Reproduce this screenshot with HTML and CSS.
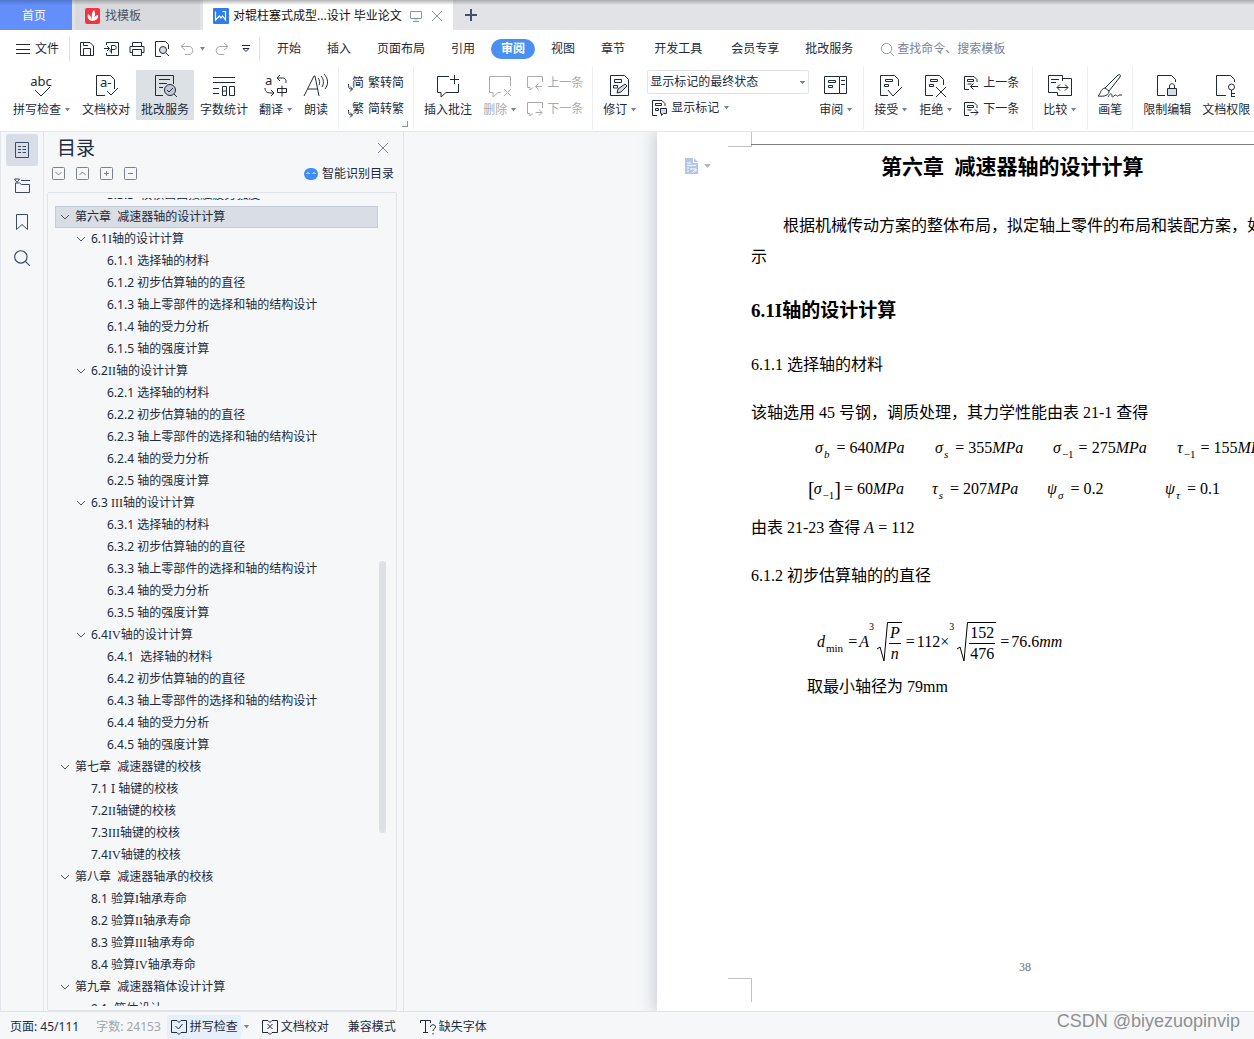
FILE: index.html
```html
<!DOCTYPE html>
<html lang="zh-CN">
<head>
<meta charset="utf-8">
<title>对辊柱塞式成型机设计 毕业论文</title>
<link rel="stylesheet" href="styles.css">
</head>
<body>
<svg class="sprite" aria-hidden="true">
  <symbol id="caret" viewBox="0 0 7 4"><path d="M1 0h5L3.500 3.500z" fill="#77829b"/></symbol>
  <symbol id="chev" viewBox="0 0 10 10"><path d="M1 3l4 4 4-4"/></symbol>
  <symbol id="hook" viewBox="0 0 5 8"><path d="M.5 0c0 4 0 5 4 5M2 2.500L4.500 5 2 7.500"/></symbol>
  <symbol id="mag" viewBox="0 0 16 16"><circle cx="7" cy="7" r="5.500"/><path d="M11 11l4 4"/></symbol>
  <symbol id="prev" viewBox="0 0 16 16"><path d="M6 14.500H1.500V1.500H11l3 3V7M4.500 4.500h6v2h-6zM4.500 9h4M15 11.500H7.500M10.500 8.500l-3 3 3 3"/></symbol>
  <symbol id="next" viewBox="0 0 16 16"><path d="M6 14.500H1.500V1.500H11l3 3V7M4.500 4.500h6v2h-6zM4.500 9h4M7.500 11.500H15M12 8.500l3 3-3 3"/></symbol>
</svg>

<header class="tabs">
  <button class="tab tab-home">首页</button>
  <button class="tab tab-tpl">
    <svg width="16" height="16" viewBox="0 0 16 16"><rect width="15" height="16" rx="2" fill="#f5333f"/><path d="M7 13C3 12 2 9 3 6c2 1 3 3 4 6C6 8 7 4 9 2c2 3 1 7-1 10 1-3 3-5 5-5 1 3-2 6-6 6z" fill="#fff"/></svg>
    找模板</button>
  <div class="tab tab-doc">
    <svg width="16" height="16" viewBox="0 0 16 16"><rect width="16" height="16" rx="1" fill="#2f7de8"/><path d="M2.500 3.500V12l4-4 1.500 2 1.500-2 3 4V3.500h-3" fill="none" stroke="#fff" stroke-width="1.200"/></svg>
    <span>对辊柱塞式成型...设计 毕业论文</span>
    <svg class="ln mute" width="12" height="12" viewBox="0 0 12 12"><path d="M.5 1.500h11v7H.5zM6 8.500v2M3 11.500h6"/></svg>
    <button class="ghost" aria-label="关闭标签"><svg class="ln mute" width="12" height="12" viewBox="0 0 12 12"><path d="M1 1l10 10M11 1L1 11"/></svg></button>
  </div>
  <button class="ghost plus" aria-label="新建标签"><svg width="12" height="12" viewBox="0 0 12 12"><path d="M6 0v12M0 6h12" stroke="#444f68" stroke-width="2"/></svg></button>
</header>

<nav class="menu">
  <button class="ghost file"><svg class="ln" width="14" height="12" viewBox="0 0 14 12"><path d="M0 1.500h14M0 6.500h14M0 10.500h14"/></svg>文件</button>
  <div class="quick">
    <button class="ghost" aria-label="保存"><svg class="ln" width="16" height="16" viewBox="0 0 16 16"><path d="M1.500 14.500v-13H11l3.500 3.500v9.500zM4.500 14V7.500h7V14M4.500 1.500v3H9"/></svg></button>
    <button class="ghost" aria-label="输出为PDF"><svg class="ln" width="16" height="16" viewBox="0 0 16 16"><path d="M2.500 4V1.500h12v13h-12V12M0 7.500h5M3 5l2.500 2.500L3 10M7.500 12.500V4.500H10c3 0 3 4 0 4H7.500c-2 0-2 2.500 0 2.500"/></svg></button>
    <button class="ghost" aria-label="打印"><svg class="ln" width="16" height="16" viewBox="0 0 16 16"><path d="M3.500 5.500v-4h9v4M3.500 11.500H1v-6h14v6h-2.500M3.500 8.500h9v6h-9z"/></svg></button>
    <button class="ghost" aria-label="打印预览"><svg class="ln" width="16" height="16" viewBox="0 0 16 16"><path d="M7 15.500H1.500V.5h10l3 3V8"/><circle cx="9" cy="9" r="3.500" fill="#d5dbe3"/><path d="M12 12l3 3"/></svg></button>
    <button class="ghost split" aria-label="撤销"><svg class="ln dim" width="14" height="14" viewBox="0 0 14 14"><path d="M5 1L1 4.500 5 8M1 4.500h8c5 0 5 8 0 8H5"/></svg><svg width="7" height="4"><use href="#caret"/></svg></button>
    <button class="ghost" aria-label="恢复"><svg class="ln dim" width="14" height="14" viewBox="0 0 14 14"><path d="M9 1l4 3.500L9 8M13 4.500H5c-5 0-5 8 0 8h4"/></svg></button>
    <button class="ghost more" aria-label="自定义"><svg class="ln" width="8" height="8" viewBox="0 0 8 8"><path d="M0 .5h8M1 3.500l3 3 3-3z"/></svg></button>
  </div>
  <ul class="items">
    <li><a href="#">开始</a></li><li><a href="#">插入</a></li><li><a href="#">页面布局</a></li><li><a href="#">引用</a></li>
    <li class="on"><a href="#">审阅</a></li><li><a href="#">视图</a></li><li class="wide"><a href="#">章节</a></li>
    <li class="wide"><a href="#">开发工具</a></li><li><a href="#">会员专享</a></li><li><a href="#">批改服务</a></li>
  </ul>
  <label class="search"><svg class="ln" width="15" height="15"><use href="#mag"/></svg><input type="text" placeholder="查找命令、搜索模板" aria-label="查找命令、搜索模板"></label>
</nav>

<section class="ribbon">
  <div class="group first">
    <button class="tool"><svg class="ln" width="24" height="24" viewBox="0 0 24 24"><text x="11" y="13" text-anchor="middle" class="abc">abc</text><path d="M5 17l6 6 9-9"/></svg><span>拼写检查<svg width="7" height="4"><use href="#caret"/></svg></span></button>
    <button class="tool"><svg class="ln" width="24" height="24" viewBox="0 0 24 24"><text x="6" y="14" class="abc">a-</text><path d="M11 22.500H2.500v-20h14l4 4V16M13 18l4 4 7-7"/></svg><span>文档校对</span></button>
    <button class="tool on"><svg class="ln" width="24" height="24" viewBox="0 0 24 24"><path d="M10 22.500H2.500v-20h18V11M6 6.500h11M6 10.500h8M6 14.500h4"/><circle cx="17" cy="17" r="5.500" fill="#c4cad3"/><path d="M14 17l2 2 4-4M21 21l3 3"/></svg><span>批改服务</span></button>
    <button class="tool"><svg class="ln" width="24" height="24" viewBox="0 0 24 24"><path d="M1 4.500h22M1 9.500h22M1 15.500h6M1 20.500h6M10.500 13.500h4v9h-4zM17.500 13.500h5v9h-5zM10.500 18h4"/></svg><span>字数统计</span></button>
    <button class="tool"><svg class="ln" width="24" height="24" viewBox="0 0 24 24"><text x="1" y="12" class="abc">a</text><path d="M16 2l-3 3 3 3M13.500 5h5c4 0 4 4 3 5M1 15c0 4 2 5 8 5M7 17l3 3-3 3M13.500 15.500h9v4h-9zM18 12.500v11"/></svg><span>翻译<svg width="7" height="4"><use href="#caret"/></svg></span></button>
    <button class="tool"><svg class="ln" width="24" height="24" viewBox="0 0 24 24"><path d="M0 23L10 3h1l4 20M4 16h10M14 5c2 2 2 5 1 7M17 3c3 3 3 8 1 11M20 1c4 4 5 10 1 15"/></svg><span>朗读</span></button>
  </div>
  <div class="group corner">
    <div class="minis">
      <button class="mini"><span class="glyph"><svg class="ln" width="5" height="8"><use href="#hook"/></svg>简</span>繁转简</button>
      <button class="mini"><span class="glyph"><svg class="ln" width="5" height="8"><use href="#hook"/></svg>繁</span>简转繁</button>
    </div>
  </div>
  <div class="group">
    <button class="tool"><svg class="ln" width="24" height="24" viewBox="0 0 24 24"><path d="M13 3.500H1.500v16H5V24l5-4.500h12.500V11M14 6.500h9M18.500 2v9"/></svg><span>插入批注</span></button>
    <button class="tool off"><svg class="ln" width="24" height="24" viewBox="0 0 24 24"><path d="M22.500 13V3.500h-21v16H5V24l5-4.500h3M16 16l7 7M23 16l-7 7"/></svg><span>删除<svg width="7" height="4"><use href="#caret"/></svg></span></button>
    <div class="minis">
      <button class="mini off"><svg class="ln" width="16" height="16" viewBox="0 0 16 16"><path d="M15.500 7V1.500H.5v11H3V15l3-2.500M15 11.500H8.500M11.500 8.500l-3 3 3 3"/></svg>上一条</button>
      <button class="mini off"><svg class="ln" width="16" height="16" viewBox="0 0 16 16"><path d="M15.500 7V1.500H.5v11H3V15l3-2.500M8.500 11.500H15M12 8.500l3 3-3 3"/></svg>下一条</button>
    </div>
  </div>
  <div class="group">
    <button class="tool"><svg class="ln" width="24" height="24" viewBox="0 0 24 24"><path d="M2.500 2.500h14l4 4v16h-18zM6.500 6.500h7v3h-7zM5.500 12.500h4v2.500h-4z"/><path d="M9 20l1-4 7-5 2 2-6 6z" fill="#d5dbe3"/></svg><span>修订<svg width="7" height="4"><use href="#caret"/></svg></span></button>
    <div class="minis markup">
      <select aria-label="标记显示状态"><option>显示标记的最终状态</option></select>
      <button class="mini"><svg class="ln" width="16" height="16" viewBox="0 0 16 16"><path d="M6 15.500H1.500V.5H11l3 3V6M4.500 3.500h6v2h-6zM4.500 8.500h3v2h-3z"/><path d="M9.500 8.500h6v5h-3l-2 2v-2h-1z" fill="#d5dbe3"/></svg>显示标记<svg width="7" height="4"><use href="#caret"/></svg></button>
    </div>
    <button class="tool"><svg class="ln" width="24" height="24" viewBox="0 0 24 24"><path d="M.5 3.500h15v17H.5zM15.500 3.500h7v17h-7M4.500 7.500h7v2h-7zM4.500 12.500h4v2h-4zM17 7.500h4M17 11.500h4"/></svg><span>审阅<svg width="7" height="4"><use href="#caret"/></svg></span></button>
  </div>
  <div class="group">
    <button class="tool"><svg class="ln" width="24" height="24" viewBox="0 0 24 24"><path d="M9 22.500H1.500v-20h14l4 4V13M6.500 6.500h7v2h-7zM5.500 11.500h4v2h-4zM9 17l5 6 9-9"/></svg><span>接受<svg width="7" height="4"><use href="#caret"/></svg></span></button>
    <button class="tool"><svg class="ln" width="24" height="24" viewBox="0 0 24 24"><path d="M9 22.500H1.500v-20h14l4 4V12M6.500 6.500h7v2h-7zM5.500 11.500h4v2h-4zM12 14l10 10M22 14L12 24"/></svg><span>拒绝<svg width="7" height="4"><use href="#caret"/></svg></span></button>
    <div class="minis last">
      <button class="mini"><svg class="ln" width="16" height="16"><use href="#prev"/></svg>上一条</button>
      <button class="mini"><svg class="ln" width="16" height="16"><use href="#next"/></svg>下一条</button>
    </div>
  </div>
  <div class="group">
    <button class="tool"><svg class="ln" width="24" height="24" viewBox="0 0 24 24"><path d="M14.500 8V2.500H.5v17h9M14.500 5.500h9v17h-14v-3M3 6.500h8M3 9.500h5M9 14.500h11M12 11.500l-3 3 3 3M17 11.500l3 3-3 3"/></svg><span>比较<svg width="7" height="4"><use href="#caret"/></svg></span></button>
  </div>
  <div class="group">
    <button class="tool"><svg class="ln" width="24" height="24" viewBox="0 0 24 24"><path d="M7 15L20 2c2-1 3 0 2 2L11 18M7 15l4 3c0 4-4 6-11 5 3-2 2-7 7-8zM10 24c2-4 4-4 4-1s3-2 4-1 1 2 3 0l3 0"/></svg><span>画笔</span></button>
  </div>
  <div class="group">
    <button class="tool"><svg class="ln" width="24" height="24" viewBox="0 0 24 24"><path d="M10 22.500H2.500v-20h14l4 4V9"/><path d="M12.500 15.500h9v7h-9z" fill="#d5dbe3"/><path d="M14.500 15v-2c0-3 5-3 5 0v2"/></svg><span>限制编辑</span></button>
    <button class="tool"><svg class="ln" width="24" height="24" viewBox="0 0 24 24"><path d="M12 22.500H2.500v-20h14l4 4V9"/><circle cx="17.500" cy="14" r="3"/><path d="M17.500 17v7M18 20.500h3M18 23.500h3"/></svg><span>文档权限</span></button>
  </div>
</section>

<main class="work">
  <aside class="rail">
    <button class="ghost on" aria-label="目录"><svg class="ln" width="16" height="18" viewBox="0 0 16 18"><path d="M1.500 1.500h13v15h-13zM4 5.500h3M8.500 5.500H12M4 8.500h3M8.500 8.500H12M4 11.500h3M8.500 11.500H12"/></svg></button>
    <button class="ghost" aria-label="章节"><svg class="ln" width="16" height="16" viewBox="0 0 16 16"><path d="M.5 1h5L3 4.500zM7 2.500h9M1.500 7v7.500h14v-8h-8l-2-1.500H1.500V9"/></svg></button>
    <button class="ghost" aria-label="书签"><svg class="ln" width="12" height="16" viewBox="0 0 12 16"><path d="M.5.5h11v15L6 10.500.5 15.500z"/></svg></button>
    <button class="ghost" aria-label="查找"><svg class="ln" width="18" height="18"><use href="#mag"/></svg></button>
  </aside>
  <section class="panel">
    <div class="panel-head"><h1>目录</h1><button class="ghost" aria-label="关闭"><svg class="ln" width="10" height="10" viewBox="0 0 10 10"><path d="M0 0l10 10M10 0L0 10"/></svg></button></div>
    <div class="panel-tools">
      <button class="ghost" aria-label="展开"><svg class="ln" width="13" height="13" viewBox="0 0 13 13"><rect x=".5" y=".5" width="12" height="12" rx="1"/><path d="M3.500 5l3 3 3-3"/></svg></button>
      <button class="ghost" aria-label="折叠"><svg class="ln" width="13" height="13" viewBox="0 0 13 13"><rect x=".5" y=".5" width="12" height="12" rx="1"/><path d="M3.500 8l3-3 3 3"/></svg></button>
      <button class="ghost" aria-label="增加级别"><svg class="ln" width="13" height="13" viewBox="0 0 13 13"><rect x=".5" y=".5" width="12" height="12" rx="1"/><path d="M4 6.500h5M6.500 4v5"/></svg></button>
      <button class="ghost" aria-label="减少级别"><svg class="ln" width="13" height="13" viewBox="0 0 13 13"><rect x=".5" y=".5" width="12" height="12" rx="1"/><path d="M4 6.500h5"/></svg></button>
      <button class="ghost smart"><svg width="14" height="12" viewBox="0 0 14 12"><rect width="14" height="12" rx="6" fill="#3f8ef7"/><path d="M2.500 6l1.500-1.500L5.500 6M8.500 6L10 4.500 11.500 6" fill="none" stroke="#fff"/></svg>智能识别目录</button>
    </div>
    <div class="tree">
      <ul>
        <li class="l3">5.3.3&nbsp; 校核齿面接触疲劳强度</li>
        <li class="l1 sel"><svg><use href="#chev"/></svg>第六章&nbsp; 减速器轴的设计计算</li>
        <li class="l2"><svg><use href="#chev"/></svg>6.1<b>I</b>轴的设计计算</li>
        <li class="l3">6.1.1 选择轴的材料</li>
        <li class="l3">6.1.2 初步估算轴的的直径</li>
        <li class="l3">6.1.3 轴上零部件的选择和轴的结构设计</li>
        <li class="l3">6.1.4 轴的受力分析</li>
        <li class="l3">6.1.5 轴的强度计算</li>
        <li class="l2"><svg><use href="#chev"/></svg>6.2<b>II</b>轴的设计计算</li>
        <li class="l3">6.2.1 选择轴的材料</li>
        <li class="l3">6.2.2 初步估算轴的的直径</li>
        <li class="l3">6.2.3 轴上零部件的选择和轴的结构设计</li>
        <li class="l3">6.2.4 轴的受力分析</li>
        <li class="l3">6.2.5 轴的强度计算</li>
        <li class="l2"><svg><use href="#chev"/></svg>6.3 <b>III</b>轴的设计计算</li>
        <li class="l3">6.3.1 选择轴的材料</li>
        <li class="l3">6.3.2 初步估算轴的的直径</li>
        <li class="l3">6.3.3 轴上零部件的选择和轴的结构设计</li>
        <li class="l3">6.3.4 轴的受力分析</li>
        <li class="l3">6.3.5 轴的强度计算</li>
        <li class="l2"><svg><use href="#chev"/></svg>6.4<b>IV</b>轴的设计计算</li>
        <li class="l3">6.4.1&nbsp; 选择轴的材料</li>
        <li class="l3">6.4.2 初步估算轴的的直径</li>
        <li class="l3">6.4.3 轴上零部件的选择和轴的结构设计</li>
        <li class="l3">6.4.4 轴的受力分析</li>
        <li class="l3">6.4.5 轴的强度计算</li>
        <li class="l1"><svg><use href="#chev"/></svg>第七章&nbsp; 减速器键的校核</li>
        <li class="leaf">7.1 I 轴键的校核</li>
        <li class="leaf">7.2<b>II</b>轴键的校核</li>
        <li class="leaf">7.3<b>III</b>轴键的校核</li>
        <li class="leaf">7.4<b>IV</b>轴键的校核</li>
        <li class="l1"><svg><use href="#chev"/></svg>第八章&nbsp; 减速器轴承的校核</li>
        <li class="leaf">8.1 验算<b>I</b>轴承寿命</li>
        <li class="leaf">8.2 验算<b>II</b>轴承寿命</li>
        <li class="leaf">8.3 验算<b>III</b>轴承寿命</li>
        <li class="leaf">8.4 验算<b>IV</b>轴承寿命</li>
        <li class="l1"><svg><use href="#chev"/></svg>第九章&nbsp; 减速器箱体设计计算</li>
        <li class="leaf">9.1&nbsp; 箱体设计</li>
      </ul>
      <div class="thumb"></div>
    </div>
  </section>
  <section class="canvas">
    <article class="page">
      <div class="gutter">
        <div class="crop top"></div>
        <button class="ghost note" aria-label="批注选项"><svg width="13" height="16" viewBox="0 0 13 16"><path d="M0 0h8v5h5v11H0z" fill="#b3c7e8"/><path d="M9 0l4 4H9z" fill="#b3c7e8"/><path d="M2 5h4M2 7.500h9M2 10h2M2 13h2M5 11h6v2H9l-1.500 1.500" stroke="#fff" fill="none"/></svg><svg width="7" height="4" viewBox="0 0 7 4"><path d="M0 0h7L3.500 4z" fill="#b4b6ba"/></svg></button>
        <div class="crop bottom"></div>
      </div>
      <div class="content">
        <div class="head-rule"></div>
        <h2>第六章&nbsp; 减速器轴的设计计算</h2>
        <p class="lead">根据机械传动方案的整体布局，拟定轴上零件的布局和装配方案，如<br>示</p>
        <h3>6.1I轴的设计计算</h3>
        <h4>6.1.1 选择轴的材料</h4>
        <p class="after-h">该轴选用 45 号钢，调质处理，其力学性能由表 21-1 查得</p>
        <div class="eqs one">
          <span><i>σ</i><sub><i>b</i></sub><u>=</u>640<i>MPa</i></span>
          <span><i>σ</i><sub><i>s</i></sub><u>=</u>355<i>MPa</i></span>
          <span><i>σ</i><sub>−1</sub><u>=</u>275<i>MPa</i></span>
          <span><i>τ</i><sub>−1</sub><u>=</u>155<i>MPa</i></span>
        </div>
        <div class="eqs two">
          <span><em>[</em><i>σ</i><sub>−1</sub><em>]</em><u>=</u>60<i>MPa</i></span>
          <span><i>τ</i><sub><i>s</i></sub><u>=</u>207<i>MPa</i></span>
          <span><i>ψ</i><sub><i>σ</i></sub><u>=</u>0.2</span>
          <span><i>ψ</i><sub><i>τ</i></sub><u>=</u>0.1</span>
        </div>
        <p class="given">由表 21-23 查得 <i>A</i> = 112</p>
        <h4 class="second">6.1.2 初步估算轴的的直径</h4>
        <div class="formula">
          <span><i>d</i><sub>min</sub></span><u>=</u><i>A</i><small>3</small>
          <svg width="11" height="40" viewBox="0 0 11 40"><path d="M0 27l3-2 4 14L10.500.5H11" fill="none" stroke="#000"/></svg><span class="frac"><i>P</i><i>n</i></span>
          <u>=</u>112×<small>3</small>
          <svg width="11" height="40" viewBox="0 0 11 40"><path d="M0 27l3-2 4 14L10.500.5H11" fill="none" stroke="#000"/></svg><span class="frac"><span>152</span><span>476</span></span>
          <u>=</u>76.6<i>mm</i>
        </div>
        <p class="result">取最小轴径为 79mm</p>
        <footer>38</footer>
      </div>
    </article>
  </section>
</main>

<footer class="status">
  <span class="cell">页面: 45/111</span>
  <span class="cell count">字数: 24153</span>
  <button class="cell spell"><span><svg class="ln" width="16" height="16" viewBox="0 0 16 16"><path d="M6 1.500H.5v12H6l2 2 2-2h5.500v-12H10l-2 2-2-2zM4.500 7l3 3 4-5"/></svg>拼写检查</span><svg width="7" height="4"><use href="#caret"/></svg></button>
  <button class="cell proof"><svg class="ln" width="16" height="16" viewBox="0 0 16 16"><path d="M6 1.500H.5v12H6l2 2 2-2h5.500v-12H10l-2 2-2-2zM5.500 5l5 5M10.500 5l-5 5"/></svg>文档校对</button>
  <span class="cell mode">兼容模式</span>
  <button class="cell font"><svg class="ln" width="16" height="16" viewBox="0 0 16 16"><path d="M.5 4V1.500h10V4M5.500 1.500v12M3 13.500h5M10.500 8c0-3 5-3 5 0 0 2-2.500 2-2.500 4M13 14v1.500"/></svg>缺失字体</button>
  <span class="mark">CSDN @biyezuopinvip</span>
</footer>
</body>
</html>
```
FILE: styles.css
```css
* { box-sizing: border-box; margin: 0; padding: 0; }
body {
  height: 100vh;
  display: flex;
  flex-direction: column;
  overflow: hidden;
  font: 12px/18px "Noto Sans", "Noto Sans CJK SC", sans-serif;
  color: #202a3d;
  background: #f5f7f9;
  white-space: nowrap;
}
ul { list-style: none; }
a { color: inherit; text-decoration: none; }
button, input, select { font: inherit; color: inherit; border: 0; background: none; }
svg { flex: none; overflow: visible; }
.sprite { position: absolute; width: 0; height: 0; }
.ln { fill: none; stroke: currentColor; }
.mute { color: #8c97ae; }
.dim { color: #a6a9ae; }
.ghost { display: flex; align-items: center; justify-content: center; }

/* window tabs */
.tabs {
  height: 30px;
  flex: none;
  display: flex;
  background: linear-gradient(#a9aaad, #e2e3e7 5px);
}
.tab { display: flex; align-items: center; height: 30px; padding-top: 1px; }
.tab-home { width: 72px; padding-right: 4px; justify-content: center; background: linear-gradient(#4e74cc, #628ffb 5px); color: #fff; }
.tab-tpl { width: 125px; margin-left: 3px; padding-left: 10px; gap: 4px; background: linear-gradient(#a4a5a8, #d9dadd 5px); color: #4d5361; }
.tab-doc { width: 250px; margin-left: 3px; padding-left: 10px; gap: 4px; background: linear-gradient(#b4b4b6, #fff 5px); color: #111; }
.tab-doc .mute { margin-left: 4px; }
.tab-doc .ghost { margin-left: 1px; }
.plus { margin-left: 12px; }

/* menu row */
.menu { height: 37px; flex: none; display: flex; align-items: center; background: #fff; padding-top: 1px; }
.file { padding: 0 10px 0 16px; gap: 5px; height: 24px; border-right: 1px solid #dcdfe4; }
.quick { display: flex; align-items: center; gap: 9px; width: 190px; height: 24px; padding-left: 9px; border-right: 1px solid #dcdfe4; }
.quick .split { gap: 5px; margin-left: 1px; }
.quick .more { margin-left: 4px; }
.items { display: flex; align-items: center; padding-left: 4px; }
.items li { padding: 0 13px; }
.items a { display: block; line-height: 20px; }
.items li.on { padding: 0 3px; }
.items .on a { padding: 0 10px; border-radius: 10px; background: #4a90f2; color: #fff; font-weight: bold; }
.items .wide { padding-right: 16px; }
.search { display: flex; align-items: center; margin-left: 14px; gap: 2px; color: #8590a8; }
.search input { width: 120px; }
.search input::placeholder { color: #77829b; }

/* ribbon */
.ribbon {
  height: 65px;
  flex: none;
  display: flex;
  overflow: hidden;
  background: #fff;
  border-bottom: 1px solid #e4e6e9;
}
.group {
  flex: none;
  position: relative;
  display: flex;
  gap: 1px;
  height: 62px;
  padding: 3px 5px 0;
  border-right: 1px solid #eceef1;
}
.group.first { padding-left: 8px; }
.group:last-child { border: 0; }
.tool { display: flex; flex-direction: column; align-items: center; height: 50px; padding: 3px 5px 0; gap: 4px; border-radius: 1px; }
.tool span { display: flex; align-items: center; gap: 3px; }
.tool.on { background: #dce1e6; }
.off { color: #a9abb0; }
.abc { font: 13px "Noto Sans", sans-serif; fill: currentColor; stroke: none; }
.minis { display: flex; flex-direction: column; margin: 0 4px; }
.minis.last { margin: 0 8px 0 4px; }
.mini { display: flex; align-items: center; gap: 4px; height: 26px; }
.glyph { display: flex; align-items: flex-end; width: 16px; font-size: 12px; }
.glyph svg { margin-right: -1px; }
.corner::after {
  content: "";
  position: absolute;
  right: 5px;
  bottom: 2px;
  width: 5px;
  height: 5px;
  border: solid #8590a8;
  border-width: 0 1px 1px 0;
}
.markup select {
  appearance: none;
  width: 162px;
  height: 24px;
  margin-bottom: 1px;
  padding-left: 2px;
  border: 1px solid #dfe2e6;
  border-radius: 2px;
  background: linear-gradient(#77829b, #77829b) no-repeat 152px 10px / 5px 1px,
    linear-gradient(#77829b, #77829b) no-repeat 153px 11px / 3px 1px,
    linear-gradient(#77829b, #77829b) no-repeat 154px 12px / 1px 1px;
}
.markup .mini { padding-left: 4px; }

/* work area */
.work { flex: 1; min-height: 0; display: flex; }
.rail { width: 44px; flex: none; display: flex; flex-direction: column; gap: 4px; padding: 2px 0 0 5px; border: solid #e2e5ea; border-width: 0 1px; }
.rail .ghost { width: 32px; height: 32px; border-radius: 2px; color: #3a4a6b; }
.rail .on { background: #d9dee6; }
.panel { width: 360px; flex: none; display: flex; flex-direction: column; border-right: 1px solid #e2e5ea; padding: 0 6px 0 3px; }
.panel-head { display: flex; align-items: center; justify-content: space-between; height: 31px; padding: 0 9px 0 10px; color: #7b818d; }
.panel-head h1 { font-size: 19px; font-weight: normal; line-height: 30px; color: #202a3d; }
.panel-tools { display: flex; align-items: center; height: 21px; gap: 11px; padding: 0 3px 0 5px; margin-bottom: 8px; color: #7b818d; }
.panel-tools .smart { margin-left: auto; gap: 4px; padding-top: 1px; color: #202a3d; }
.tree { flex: 1; min-height: 0; position: relative; overflow: hidden; border: 1px solid #e0e4e9; border-radius: 2px; padding: 5px 18px 4px 7px; }
.tree ul { height: 100%; overflow: hidden; }
.tree li { display: flex; align-items: center; height: 22px; white-space: pre; }
.tree li:first-child { margin-top: -14px; }
.tree svg { width: 10px; height: 10px; margin-right: 5px; fill: none; stroke: #4b5568; }
.tree b { font: 12px/18px "Liberation Serif", serif; }
.tree .l1 { padding-left: 5px; }
.tree .l2 { padding-left: 21px; }
.tree .l3 { padding-left: 52px; }
.tree .leaf { padding-left: 36px; }
.tree .sel { padding-left: 4px; background: #d9dde4; border: 1px solid #c5cdd8; }
.thumb { position: absolute; right: 10px; top: 45%; width: 7px; height: 272px; border-radius: 4px; background: #dde1e5; }

/* document */
.canvas { flex: 1; min-width: 0; padding-left: 253px; overflow: hidden; }
.page {
  height: 100%;
  display: grid;
  grid-template-columns: 94px 1fr;
  background: #fff;
  box-shadow: 0 0 16px 1px #bfc3c8;
  font: 16px/30px "Liberation Serif", "Noto Sans CJK SC", serif;
  color: #000;
}
.gutter { display: flex; flex-direction: column; align-items: flex-end; padding-bottom: 9px; }
.crop { width: 24px; border: 0 solid #c2c2c2; margin-right: -1px; }
.crop.top { height: 15px; border-width: 0 1px 1px 0; }
.crop.bottom { height: 24px; border-width: 1px 1px 0 0; margin-top: auto; }
.note { gap: 6px; margin: 11px 40px 0 0; }
.content { min-width: 0; overflow: hidden; display: flex; flex-direction: column; padding-bottom: 34px; }
.head-rule { height: 13px; border-bottom: 1px solid #7f7f7f; flex: none; }
h2 { font-size: 21px; line-height: 30px; margin: 7px 0 28px 130px; }
.lead { line-height: 31px; text-indent: 32px; }
h3 { font-size: 19px; line-height: 30px; margin: 24px 0; }
h4 { font-size: 16px; font-weight: normal; }
.after-h { margin-top: 18px; }
.content u { text-decoration: none; margin: 0 4px; }
.content sub { font-size: 11px; line-height: 0; vertical-align: -5px; margin: 0 1px; }
.content sub:has(i) { margin-right: 3px; }
.eqs { display: grid; }
.eqs em { font: 20px/24px "Liberation Serif", serif; vertical-align: -2px; margin: 0 -1px; }
.one { grid-template-columns: 120px 118px 124px auto; margin: 5px 0 11px 64px; }
.two { grid-template-columns: 123px 115px 118px auto; margin: 0 0 9px 58px; }
.second { margin-top: 18px; }
.formula { display: flex; align-items: center; height: 40px; margin: 31px 0 10px 66px; }
.formula u { margin: 0 2px 0 4px; }
.formula small { font-size: 10px; line-height: 10px; align-self: flex-start; margin-right: 3px; }
.frac { display: flex; flex-direction: column; align-self: stretch; text-align: center; border-top: 1px solid #000; line-height: 20px; padding: 0 1px; }
.frac > :first-child { border-bottom: 1px solid #000; padding: 0 1px; }
.result { margin-left: 56px; }
.content footer { margin: auto 0 0 268px; font-size: 12px; line-height: 20px; color: #6f6f6f; }

/* status bar */
.status { height: 28px; flex: none; position: relative; display: flex; align-items: center; border-top: 1px solid #dfe3e7; padding-top: 2px; }
.cell { display: flex; align-items: center; height: 24px; gap: 3px; color: #202a3d; }
.cell:first-child { padding: 0 6px 0 10px; }
.count { padding: 0 4px 0 11px; color: #a3a6ab; }
.spell { gap: 2px; padding-right: 4px; }
.spell span { display: flex; align-items: center; gap: 3px; height: 24px; padding: 0 3px 0 4px; background: #e6f0fc; border-radius: 2px; margin-left: 2px; }
.proof { padding: 0 19px 0 8px; }
.mode { padding-right: 5px; }
.font { padding-left: 19px; }
.mark { position: absolute; right: 14px; top: 0; font: 18px/18px "Liberation Sans", sans-serif; color: #8e9093; }
```
